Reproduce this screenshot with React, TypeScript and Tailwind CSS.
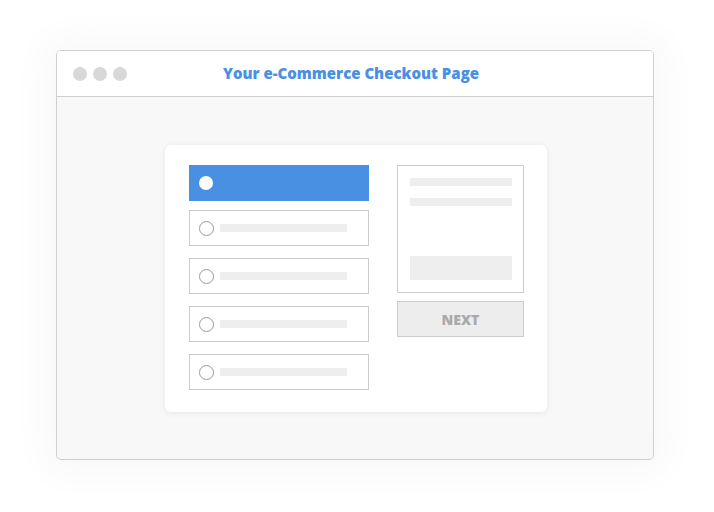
export default function App() {
  const options = [0, 1, 2, 3];
  return (
    <div className="w-[714px] h-[512px] bg-white pt-[50px] pl-[56px]" style={{ fontFamily: '"Open Sans", Lato, sans-serif' }}>
      <div className="w-[598px] h-[410px] rounded-[5px] border border-[#cfcfcf] bg-[#f8f8f8] shadow-[0_0_40px_10px_rgba(0,0,0,0.035)] overflow-hidden flex flex-col">
        <div className="h-[46px] shrink-0 bg-white border-b border-[#cfcfcf] relative flex items-center justify-center pr-[8px]">
          <div className="absolute left-[16px] top-[16px] flex gap-[6px]">
            <span className="w-[14px] h-[14px] rounded-full bg-[#d8d8d8]" />
            <span className="w-[14px] h-[14px] rounded-full bg-[#d8d8d8]" />
            <span className="w-[14px] h-[14px] rounded-full bg-[#d8d8d8]" />
          </div>
          <span className="text-[15px] font-extrabold text-[#4a90e2]">Your e-Commerce Checkout Page</span>
        </div>
        <div className="pt-[48px] pl-[108px]">
          <div className="w-[382px] h-[267px] bg-white rounded-[6px] shadow-[0_1px_6px_rgba(0,0,0,0.08)] pt-[20px] pl-[24px] flex gap-[28px]">
            <div className="w-[180px] flex flex-col">
              <div className="h-[36px] bg-[#4a90e2] flex items-center pl-[10px]">
                <span className="w-[14px] h-[14px] rounded-full bg-white" />
              </div>
              {options.map((i) => (
                <div key={i} className={`h-[36px] border border-[#cccccc] flex items-center pl-[9px] ${i === 0 ? 'mt-[9px]' : 'mt-[12px]'}`}>
                  <span className="w-[15px] h-[15px] rounded-full border border-[#999999]" />
                  <span className="ml-[6px] w-[127px] h-[8px] bg-[#eeeeee]" />
                </div>
              ))}
            </div>
            <div className="w-[127px] flex flex-col">
              <div className="h-[128px] border border-[#cccccc] pt-[12px] pl-[12px] flex flex-col">
                <span className="w-[102px] h-[8px] bg-[#eeeeee]" />
                <span className="w-[102px] h-[8px] bg-[#eeeeee] mt-[12px]" />
                <span className="w-[102px] h-[24px] bg-[#eeeeee] mt-[50px]" />
              </div>
              <div className="mt-[8px] h-[36px] border border-[#cccccc] bg-[#ededed] flex items-center justify-center text-[14px] font-extrabold text-[#aaaaaa]">
                NEXT
              </div>
            </div>
          </div>
        </div>
      </div>
    </div>
  );
}
